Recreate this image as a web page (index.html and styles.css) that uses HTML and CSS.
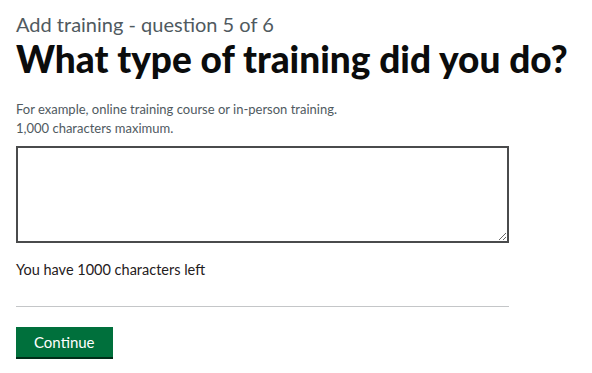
FILE: index.html
```html
<html><head>
  <title>Add training - question 5 of 6</title>
  <link rel="stylesheet" href="styles.css">
</head>
<body>
  <main class="page">
    <form class="form-group">
      <span class="caption">Add training - question 5 of 6</span>
      <h1 class="heading">What type of training did you do?</h1>

      <div class="hint">
        For example, online training course or in-person training.<br>
        1,000 characters maximum.
      </div>

      <textarea class="textarea" rows="5"></textarea>

      <div class="count">You have 1000 characters left</div>

      <hr class="section-break">

      <button type="submit" class="button">Continue</button>
    </form>
  </main>
</body></html>
```

FILE: styles.css
```css
* {
  margin: 0;
  padding: 0;
  box-sizing: border-box;
  font-family: Lato, 'Noto Sans', Arial, sans-serif;
}

body {
  background: white;
  color: #0b0c0c;
}

.page {
  padding: 12px 16px;
  width: 525px;
}

.form-group {
  display: flex;
  flex-direction: column;
  align-items: flex-start;
}

.caption {
  font-size: 20px;
  line-height: 24px;
  color: #505a5f;
}

.heading {
  font-size: 37px;
  line-height: 42px;
  font-weight: 900;
  white-space: nowrap;
  margin-top: 2px;
  margin-bottom: 20px;
}

.hint {
  font-size: 13px;
  line-height: 19px;
  color: #505a5f;
  margin-bottom: 8px;
}

.textarea {
  width: 100%;
  height: 97px;
  border: 2px solid #4a4b4c;
  border-radius: 0;
  resize: vertical;
  outline: none;
  font-size: 15px;
}

.count {
  font-size: 14.5px;
  line-height: 20px;
  margin-top: 17px;
  color: #1f2021;
}

.section-break {
  width: 100%;
  border: none;
  border-top: 1px solid #c4c6c8;
  margin: 26px 0 20px;
}

.button {
  padding: 6px 18px;
  border: none;
  border-radius: 0;
  background: #00703c;
  color: white;
  font-size: 15px;
  line-height: 18px;
  box-shadow: 0 2px 0 #002d18;
  cursor: pointer;
}

.button:hover {
  background: #005a30;
}
```
